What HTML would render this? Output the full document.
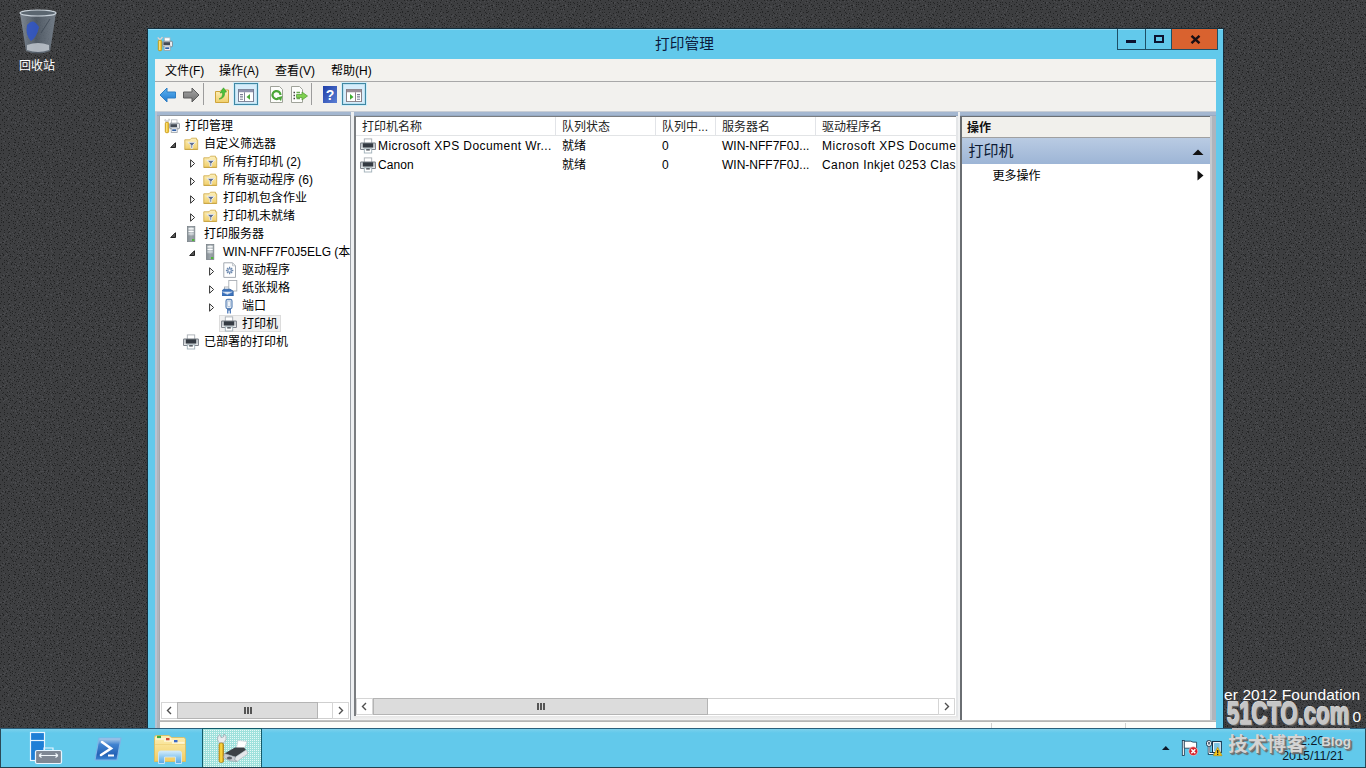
<!DOCTYPE html>
<html lang="zh-CN">
<head>
<meta charset="utf-8">
<title>打印管理</title>
<style>
html,body{margin:0;padding:0;}
body{width:1366px;height:768px;overflow:hidden;position:relative;background:#3b3c3e;font-family:"Liberation Sans","Noto Sans CJK SC",sans-serif;font-size:12px;color:#000;}
#bg{position:absolute;left:0;top:0;}
.abs{position:absolute;}

#win{left:147px;top:28px;width:1077px;height:720px;background:#62c9eb;box-sizing:border-box;border:1px solid #14303f;box-shadow:inset 0 1px 0 #93d9f1;}
#title{left:-1px;top:0;width:1075px;height:30px;text-align:center;line-height:31px;font-size:14.7px;color:#0b1a3c;}
#client{left:7px;top:30px;width:1061px;height:680px;background:#f0f0ee;overflow:hidden;}
.cbtn{top:0;height:21px;box-sizing:border-box;border-left:1px solid #1d4f66;border-bottom:1px solid #1d4f66;}
#menubar{left:0;top:0;width:1061px;height:22px;background:#f3f2ee;border-bottom:1px solid #a8a8a8;}
.mi{top:1px;height:22px;line-height:23px;font-size:12px;color:#000;white-space:nowrap;}
#toolbar{left:0;top:23px;width:1061px;height:29px;background:#f2f1ee;}
#band{left:0;top:52px;width:1061px;height:5px;background:linear-gradient(#c8cdd4 0,#c8cdd4 1px,#a4b7d0 1px,#a4b7d0 4px,#96a9c2 4px);}
.pane{background:#fff;}
.row{position:absolute;left:0;height:18px;line-height:18px;white-space:nowrap;font-size:12px;}
.row span.t{position:absolute;top:0;}
.ico{position:absolute;}
.hdr{position:absolute;top:0;height:18px;line-height:21px;font-size:12px;color:#222;white-space:nowrap;box-sizing:border-box;border-right:1px solid #e2e4e8;padding-left:6px;}
.cell{position:absolute;height:19px;line-height:21px;white-space:nowrap;font-size:12px;letter-spacing:0.2px;}
#taskbar{left:0;top:728px;width:1366px;height:40px;background:linear-gradient(#7bd0ec 0,#62c9eb 4px);box-sizing:border-box;border-top:1px solid #2a5f7c;border-bottom:1px solid #23414d;}
#mdi{background:#aeb4bc;}
.sb{background:#fff;box-sizing:border-box;border-top:1px solid #cfcfcf;border-bottom:1px solid #cfcfcf;}
.sbb{top:-1px;width:17px;height:17px;box-sizing:border-box;border:1px solid #d5d5d5;background:#fff;}
.sbb svg{position:absolute;left:-1px;top:-1px;}
.sbt{top:-1px;height:17px;box-sizing:border-box;background:#dcdcdc;border:1px solid #b4b4b4;}
.sbt i{position:absolute;left:50%;top:4px;margin-left:-4px;width:2px;height:7px;background:#555;box-shadow:3px 0 0 #555,6px 0 0 #555;}
.tb{position:absolute;}
.tbsel{position:absolute;top:1px;width:24px;height:22px;box-sizing:border-box;border:1px solid #3f87a3;box-shadow:0 0 0 1px #d2effa,inset 0 0 0 1px #bfe0ef;background:#d6edfb;}

</style>
</head>
<body>
<svg width="0" height="0" style="position:absolute"><defs>
<linearGradient id="gfold" x1="0" y1="0" x2="0" y2="1"><stop offset="0" stop-color="#fcf0bd"/><stop offset="1" stop-color="#f1cf6a"/></linearGradient>
<linearGradient id="gsrv" x1="0" y1="0" x2="1" y2="0"><stop offset="0" stop-color="#8d969c"/><stop offset="0.5" stop-color="#c2c9cd"/><stop offset="1" stop-color="#9aa2a8"/></linearGradient>
<symbol id="i-prn" viewBox="0 0 16 16"><rect x="4.300" y="0.900" width="7.400" height="5" fill="#fff" stroke="#a9aeb4" stroke-width="0.9"/><rect x="0.400" y="4.900" width="15.200" height="6.600" rx="0.500" fill="#8d939a" stroke="#6e747c" stroke-width="0.8"/><rect x="1.200" y="5.600" width="1.500" height="5" fill="#d4d8dc"/><rect x="13.300" y="5.600" width="1.500" height="5" fill="#d4d8dc"/><rect x="2.900" y="5.400" width="10.200" height="4.300" fill="#343a42"/><rect x="1" y="9.700" width="14" height="1.100" fill="#f2f4f6"/><rect x="4.300" y="10.800" width="7.400" height="4.200" fill="#fff" stroke="#9fb0b8" stroke-width="0.9"/><rect x="6.200" y="11.200" width="3.600" height="1.300" fill="#3a4048"/></symbol>
<symbol id="i-pm" viewBox="0 0 16 16"><path d="M0.8 1.5L3 4.2L5.6 1" stroke="#b9bcc0" stroke-width="1.7" fill="none"/><path d="M1.2 1.6L3 3.8L5.2 1.2" stroke="#f4f4f4" stroke-width="0.8" fill="none"/><rect x="1.3" y="4.3" width="3.4" height="10.4" rx="1.2" fill="#f3c32c" stroke="#c29412" stroke-width="0.8"/><rect x="2.2" y="5" width="1" height="9" fill="#fbe58a"/><rect x="7.5" y="1.8" width="5.5" height="4" fill="#fff" stroke="#b4b8be" stroke-width="0.8"/><rect x="5.8" y="5.2" width="9.6" height="5.6" rx="0.8" fill="#cfd4da" stroke="#7b828a" stroke-width="0.8"/><rect x="6.5" y="6.2" width="6.5" height="2.8" fill="#434a54"/><rect x="13.3" y="6" width="1.6" height="4" fill="#eef0f2"/><rect x="7.2" y="10" width="6" height="4.4" fill="#fff" stroke="#9aa0a6" stroke-width="0.8"/><rect x="8.2" y="11.3" width="4" height="1.8" fill="#2f5fa8"/></symbol>
<symbol id="i-ff" viewBox="0 0 16 16"><path d="M0.8 3.8H6L7.5 2.2H12.500V3.800H13.700V13.500H0.800Z" fill="url(#gfold)" stroke="#d4b152" stroke-width="0.9"/><path d="M0.800 13.300H13.700" stroke="#c19d3e" stroke-width="0.8"/><path d="M4 6.300H11.500L8.700 9.300V12.300H6.900V9.300Z" fill="#5d6d92" stroke="#f4f7fb" stroke-width="0.9"/></symbol>
<symbol id="i-srv" viewBox="0 0 16 16"><rect x="3.400" y="0.400" width="7.400" height="15.200" fill="url(#gsrv)" stroke="#7d858b" stroke-width="0.8"/><rect x="4.500" y="2.200" width="5.200" height="1.300" fill="#fff"/><rect x="4.500" y="4.800" width="5.200" height="1.300" fill="#fff"/><rect x="4.500" y="7.400" width="5.200" height="1" fill="#dfe3e6"/><rect x="3.800" y="9.500" width="6.600" height="5.700" fill="#7f898f" opacity="0.55"/><rect x="8" y="13" width="2.300" height="2" fill="#4fb83a"/></symbol>
<symbol id="i-drv" viewBox="0 0 16 16"><path d="M1.800 0.800H10.500L13.500 3.800V15.400H1.800Z" fill="#fff" stroke="#9aa0a8" stroke-width="0.9"/><path d="M10.500 0.800V3.800H13.500" fill="none" stroke="#b4bac0" stroke-width="0.8"/><g stroke="#6a86ac" stroke-width="1.300"><path d="M7.600 4.800V12.200M3.900 8.500H11.300M5 5.900L10.200 11.100M10.200 5.900L5 11.100"/></g><circle cx="7.600" cy="8.500" r="2.300" fill="#8aa2c4"/><circle cx="7.600" cy="8.500" r="1" fill="#fff"/></symbol>
<symbol id="i-form" viewBox="0 0 16 16"><rect x="2.500" y="7" width="7.500" height="6" fill="#fff" stroke="#a9aeb4" stroke-width="0.9"/><rect x="6.800" y="0.500" width="8" height="10.500" fill="#fff" stroke="#a9aeb4" stroke-width="0.9"/><path d="M-0.500 11.200L1.800 9.200H8L11.200 11.200V16H-0.500Z" fill="#3d73bd" stroke="#2f5f9f" stroke-width="0.8"/><path d="M0.300 11.800L5.300 14.300L10.400 11.800" fill="#dfe9f6" stroke="#c5d3e8" stroke-width="0.7"/></symbol>
<symbol id="i-port" viewBox="0 0 16 16"><rect x="4" y="1.300" width="6" height="9.400" rx="1.800" fill="#e4ecf6" stroke="#5f86b8" stroke-width="1.200"/><rect x="5.800" y="3" width="2.400" height="5.500" fill="#fff" stroke="#9db3d0" stroke-width="0.700"/><rect x="5" y="10.700" width="4" height="2" fill="#4f7ab4"/><path d="M5.800 12.500V15.600M8.300 12.500V15.600" stroke="#3b6db4" stroke-width="1.200"/></symbol>
</defs></svg>

<svg id="bg" width="1366" height="768"><defs><pattern id="noise" width="72" height="72" patternUnits="userSpaceOnUse"><rect width="72" height="72" fill="#3d3e40"/><path fill="#4a4b4e" d="M0 26h1v1h-1zM0 30h1v1h-1zM0 63h1v1h-1zM1 26h1v1h-1zM1 38h1v1h-1zM1 60h1v1h-1zM2 19h1v1h-1zM2 34h1v1h-1zM2 61h1v1h-1zM3 1h1v1h-1zM3 4h1v1h-1zM3 21h1v1h-1zM3 25h1v1h-1zM3 27h1v1h-1zM3 41h1v1h-1zM3 58h1v1h-1zM3 61h1v1h-1zM3 69h1v1h-1zM4 17h1v1h-1zM4 18h1v1h-1zM4 18h1v1h-1zM4 25h1v1h-1zM4 26h1v1h-1zM4 40h1v1h-1zM4 59h1v1h-1zM4 69h1v1h-1zM5 0h1v1h-1zM5 0h1v1h-1zM5 20h1v1h-1zM5 24h1v1h-1zM5 39h1v1h-1zM6 22h1v1h-1zM6 37h1v1h-1zM6 39h1v1h-1zM6 57h1v1h-1zM7 23h1v1h-1zM7 30h1v1h-1zM7 38h1v1h-1zM7 58h1v1h-1zM8 13h1v1h-1zM8 27h1v1h-1zM8 31h1v1h-1zM8 41h1v1h-1zM8 46h1v1h-1zM8 47h1v1h-1zM8 56h1v1h-1zM8 65h1v1h-1zM9 4h1v1h-1zM9 12h1v1h-1zM9 14h1v1h-1zM9 17h1v1h-1zM9 34h1v1h-1zM9 43h1v1h-1zM9 67h1v1h-1zM9 71h1v1h-1zM10 0h1v1h-1zM10 17h1v1h-1zM10 45h1v1h-1zM10 61h1v1h-1zM11 21h1v1h-1zM11 29h1v1h-1zM11 32h1v1h-1zM11 50h1v1h-1zM11 65h1v1h-1zM12 16h1v1h-1zM12 33h1v1h-1zM12 61h1v1h-1zM13 2h1v1h-1zM13 18h1v1h-1zM13 20h1v1h-1zM13 25h1v1h-1zM13 39h1v1h-1zM13 50h1v1h-1zM13 71h1v1h-1zM14 58h1v1h-1zM15 0h1v1h-1zM15 2h1v1h-1zM15 14h1v1h-1zM15 47h1v1h-1zM15 50h1v1h-1zM15 51h1v1h-1zM16 8h1v1h-1zM16 34h1v1h-1zM16 53h1v1h-1zM16 62h1v1h-1zM17 5h1v1h-1zM17 6h1v1h-1zM17 18h1v1h-1zM17 26h1v1h-1zM17 30h1v1h-1zM17 39h1v1h-1zM17 49h1v1h-1zM18 25h1v1h-1zM18 29h1v1h-1zM18 33h1v1h-1zM18 35h1v1h-1zM18 49h1v1h-1zM18 49h1v1h-1zM18 60h1v1h-1zM19 2h1v1h-1zM19 8h1v1h-1zM19 16h1v1h-1zM19 22h1v1h-1zM19 37h1v1h-1zM19 41h1v1h-1zM19 46h1v1h-1zM19 61h1v1h-1zM20 15h1v1h-1zM20 15h1v1h-1zM20 16h1v1h-1zM20 25h1v1h-1zM20 41h1v1h-1zM20 42h1v1h-1zM20 52h1v1h-1zM20 53h1v1h-1zM20 61h1v1h-1zM20 63h1v1h-1zM21 14h1v1h-1zM21 23h1v1h-1zM21 28h1v1h-1zM21 28h1v1h-1zM22 23h1v1h-1zM22 65h1v1h-1zM22 69h1v1h-1zM23 1h1v1h-1zM23 30h1v1h-1zM23 35h1v1h-1zM23 41h1v1h-1zM23 43h1v1h-1zM23 45h1v1h-1zM23 62h1v1h-1zM23 70h1v1h-1zM24 6h1v1h-1zM24 11h1v1h-1zM24 19h1v1h-1zM24 20h1v1h-1zM24 25h1v1h-1zM24 34h1v1h-1zM24 37h1v1h-1zM24 51h1v1h-1zM24 53h1v1h-1zM25 34h1v1h-1zM25 40h1v1h-1zM25 46h1v1h-1zM25 48h1v1h-1zM25 52h1v1h-1zM26 8h1v1h-1zM26 25h1v1h-1zM26 51h1v1h-1zM26 65h1v1h-1zM26 69h1v1h-1zM27 17h1v1h-1zM27 53h1v1h-1zM27 59h1v1h-1zM27 69h1v1h-1zM27 70h1v1h-1zM28 13h1v1h-1zM28 20h1v1h-1zM28 30h1v1h-1zM28 35h1v1h-1zM28 56h1v1h-1zM29 4h1v1h-1zM29 33h1v1h-1zM29 37h1v1h-1zM29 45h1v1h-1zM30 18h1v1h-1zM30 31h1v1h-1zM30 33h1v1h-1zM30 37h1v1h-1zM30 46h1v1h-1zM30 52h1v1h-1zM31 22h1v1h-1zM31 53h1v1h-1zM31 56h1v1h-1zM31 61h1v1h-1zM31 63h1v1h-1zM31 67h1v1h-1zM32 15h1v1h-1zM32 30h1v1h-1zM32 31h1v1h-1zM32 35h1v1h-1zM32 47h1v1h-1zM32 54h1v1h-1zM32 62h1v1h-1zM32 66h1v1h-1zM32 68h1v1h-1zM32 70h1v1h-1zM33 3h1v1h-1zM33 21h1v1h-1zM33 23h1v1h-1zM33 31h1v1h-1zM33 40h1v1h-1zM33 62h1v1h-1zM33 62h1v1h-1zM33 63h1v1h-1zM33 65h1v1h-1zM34 13h1v1h-1zM34 34h1v1h-1zM34 47h1v1h-1zM34 66h1v1h-1zM34 67h1v1h-1zM35 2h1v1h-1zM35 8h1v1h-1zM35 46h1v1h-1zM35 46h1v1h-1zM35 68h1v1h-1zM35 70h1v1h-1zM36 18h1v1h-1zM36 28h1v1h-1zM36 45h1v1h-1zM36 46h1v1h-1zM36 46h1v1h-1zM36 68h1v1h-1zM37 7h1v1h-1zM37 29h1v1h-1zM37 31h1v1h-1zM37 47h1v1h-1zM38 2h1v1h-1zM38 3h1v1h-1zM38 23h1v1h-1zM38 43h1v1h-1zM38 70h1v1h-1zM39 2h1v1h-1zM39 14h1v1h-1zM39 15h1v1h-1zM39 35h1v1h-1zM39 40h1v1h-1zM39 51h1v1h-1zM39 52h1v1h-1zM39 56h1v1h-1zM39 59h1v1h-1zM39 60h1v1h-1zM39 70h1v1h-1zM40 26h1v1h-1zM40 35h1v1h-1zM40 39h1v1h-1zM40 52h1v1h-1zM40 67h1v1h-1zM41 22h1v1h-1zM41 23h1v1h-1zM41 29h1v1h-1zM41 39h1v1h-1zM41 63h1v1h-1zM42 6h1v1h-1zM42 18h1v1h-1zM42 24h1v1h-1zM42 36h1v1h-1zM42 37h1v1h-1zM42 39h1v1h-1zM42 56h1v1h-1zM42 57h1v1h-1zM43 22h1v1h-1zM43 27h1v1h-1zM43 39h1v1h-1zM43 46h1v1h-1zM43 54h1v1h-1zM44 27h1v1h-1zM44 30h1v1h-1zM44 31h1v1h-1zM44 41h1v1h-1zM44 52h1v1h-1zM45 29h1v1h-1zM45 60h1v1h-1zM46 1h1v1h-1zM46 7h1v1h-1zM46 8h1v1h-1zM46 34h1v1h-1zM46 39h1v1h-1zM46 41h1v1h-1zM46 41h1v1h-1zM46 60h1v1h-1zM47 8h1v1h-1zM47 38h1v1h-1zM47 53h1v1h-1zM47 57h1v1h-1zM47 64h1v1h-1zM48 2h1v1h-1zM48 6h1v1h-1zM48 14h1v1h-1zM48 41h1v1h-1zM48 49h1v1h-1zM48 60h1v1h-1zM48 69h1v1h-1zM49 67h1v1h-1zM50 6h1v1h-1zM50 15h1v1h-1zM50 18h1v1h-1zM50 20h1v1h-1zM50 27h1v1h-1zM50 30h1v1h-1zM50 30h1v1h-1zM50 32h1v1h-1zM50 49h1v1h-1zM50 52h1v1h-1zM50 71h1v1h-1zM51 6h1v1h-1zM51 7h1v1h-1zM51 22h1v1h-1zM51 23h1v1h-1zM51 25h1v1h-1zM51 34h1v1h-1zM51 35h1v1h-1zM51 39h1v1h-1zM51 40h1v1h-1zM51 42h1v1h-1zM51 43h1v1h-1zM51 63h1v1h-1zM52 1h1v1h-1zM52 36h1v1h-1zM52 55h1v1h-1zM52 59h1v1h-1zM52 67h1v1h-1zM53 10h1v1h-1zM53 15h1v1h-1zM53 17h1v1h-1zM53 32h1v1h-1zM53 42h1v1h-1zM53 44h1v1h-1zM53 59h1v1h-1zM54 5h1v1h-1zM54 61h1v1h-1zM55 15h1v1h-1zM55 30h1v1h-1zM55 48h1v1h-1zM55 52h1v1h-1zM55 53h1v1h-1zM56 1h1v1h-1zM56 13h1v1h-1zM56 22h1v1h-1zM56 26h1v1h-1zM56 67h1v1h-1zM57 10h1v1h-1zM57 45h1v1h-1zM57 48h1v1h-1zM57 51h1v1h-1zM57 62h1v1h-1zM57 65h1v1h-1zM57 67h1v1h-1zM58 0h1v1h-1zM58 4h1v1h-1zM58 7h1v1h-1zM58 66h1v1h-1zM59 1h1v1h-1zM59 9h1v1h-1zM59 10h1v1h-1zM59 15h1v1h-1zM59 15h1v1h-1zM59 46h1v1h-1zM59 49h1v1h-1zM59 50h1v1h-1zM59 57h1v1h-1zM60 13h1v1h-1zM60 17h1v1h-1zM60 21h1v1h-1zM60 41h1v1h-1zM60 54h1v1h-1zM60 65h1v1h-1zM61 4h1v1h-1zM61 4h1v1h-1zM61 5h1v1h-1zM61 6h1v1h-1zM61 17h1v1h-1zM61 21h1v1h-1zM61 28h1v1h-1zM61 51h1v1h-1zM62 5h1v1h-1zM62 37h1v1h-1zM62 49h1v1h-1zM62 59h1v1h-1zM63 7h1v1h-1zM63 20h1v1h-1zM63 35h1v1h-1zM63 38h1v1h-1zM63 55h1v1h-1zM64 34h1v1h-1zM64 37h1v1h-1zM64 65h1v1h-1zM64 66h1v1h-1zM65 16h1v1h-1zM66 0h1v1h-1zM66 11h1v1h-1zM66 16h1v1h-1zM66 16h1v1h-1zM66 16h1v1h-1zM66 23h1v1h-1zM66 29h1v1h-1zM66 37h1v1h-1zM66 45h1v1h-1zM66 70h1v1h-1zM67 14h1v1h-1zM67 30h1v1h-1zM67 33h1v1h-1zM67 42h1v1h-1zM67 49h1v1h-1zM67 66h1v1h-1zM68 6h1v1h-1zM68 12h1v1h-1zM68 15h1v1h-1zM68 15h1v1h-1zM68 22h1v1h-1zM68 30h1v1h-1zM69 17h1v1h-1zM69 28h1v1h-1zM69 50h1v1h-1zM69 52h1v1h-1zM69 64h1v1h-1zM69 71h1v1h-1zM70 9h1v1h-1zM70 10h1v1h-1zM70 11h1v1h-1zM70 30h1v1h-1zM70 33h1v1h-1zM70 61h1v1h-1zM70 63h1v1h-1zM71 6h1v1h-1zM71 7h1v1h-1zM71 25h1v1h-1zM71 38h1v1h-1zM71 39h1v1h-1zM71 48h1v1h-1z"/><path fill="#242526" d="M0 9h1v1h-1zM0 15h1v1h-1zM0 20h1v1h-1zM0 28h1v1h-1zM0 39h1v1h-1zM0 42h1v1h-1zM0 52h1v1h-1zM0 56h1v1h-1zM0 61h1v1h-1zM1 2h1v1h-1zM1 4h1v1h-1zM1 6h1v1h-1zM1 13h1v1h-1zM1 30h1v1h-1zM1 64h1v1h-1zM1 67h1v1h-1zM1 71h1v1h-1zM2 22h1v1h-1zM2 26h1v1h-1zM2 33h1v1h-1zM2 37h1v1h-1zM2 47h1v1h-1zM2 48h1v1h-1zM2 59h1v1h-1zM3 5h1v1h-1zM3 6h1v1h-1zM3 9h1v1h-1zM3 19h1v1h-1zM3 23h1v1h-1zM3 26h1v1h-1zM3 32h1v1h-1zM3 38h1v1h-1zM3 39h1v1h-1zM3 63h1v1h-1zM3 66h1v1h-1zM4 1h1v1h-1zM4 14h1v1h-1zM4 16h1v1h-1zM4 44h1v1h-1zM4 46h1v1h-1zM4 50h1v1h-1zM4 52h1v1h-1zM4 54h1v1h-1zM5 28h1v1h-1zM5 34h1v1h-1zM5 59h1v1h-1zM5 60h1v1h-1zM5 69h1v1h-1zM6 4h1v1h-1zM6 25h1v1h-1zM6 28h1v1h-1zM6 35h1v1h-1zM6 44h1v1h-1zM6 48h1v1h-1zM6 56h1v1h-1zM7 13h1v1h-1zM7 20h1v1h-1zM7 21h1v1h-1zM7 32h1v1h-1zM7 36h1v1h-1zM7 45h1v1h-1zM7 53h1v1h-1zM7 61h1v1h-1zM7 65h1v1h-1zM8 2h1v1h-1zM8 6h1v1h-1zM8 11h1v1h-1zM8 16h1v1h-1zM8 39h1v1h-1zM8 59h1v1h-1zM8 66h1v1h-1zM8 71h1v1h-1zM9 0h1v1h-1zM9 6h1v1h-1zM9 9h1v1h-1zM9 15h1v1h-1zM9 22h1v1h-1zM9 31h1v1h-1zM9 35h1v1h-1zM9 42h1v1h-1zM9 59h1v1h-1zM9 70h1v1h-1zM10 19h1v1h-1zM10 24h1v1h-1zM10 27h1v1h-1zM10 38h1v1h-1zM10 40h1v1h-1zM10 53h1v1h-1zM11 4h1v1h-1zM11 12h1v1h-1zM11 47h1v1h-1zM11 48h1v1h-1zM11 54h1v1h-1zM11 61h1v1h-1zM11 64h1v1h-1zM11 66h1v1h-1zM12 23h1v1h-1zM12 25h1v1h-1zM12 32h1v1h-1zM12 40h1v1h-1zM12 46h1v1h-1zM12 56h1v1h-1zM13 5h1v1h-1zM13 7h1v1h-1zM13 35h1v1h-1zM13 52h1v1h-1zM13 57h1v1h-1zM13 60h1v1h-1zM13 63h1v1h-1zM14 1h1v1h-1zM14 10h1v1h-1zM14 12h1v1h-1zM14 17h1v1h-1zM14 20h1v1h-1zM14 27h1v1h-1zM14 36h1v1h-1zM14 43h1v1h-1zM14 48h1v1h-1zM14 67h1v1h-1zM14 70h1v1h-1zM15 5h1v1h-1zM15 8h1v1h-1zM15 12h1v1h-1zM15 16h1v1h-1zM15 24h1v1h-1zM15 42h1v1h-1zM15 46h1v1h-1zM15 57h1v1h-1zM15 68h1v1h-1zM15 70h1v1h-1zM16 11h1v1h-1zM16 21h1v1h-1zM16 29h1v1h-1zM16 41h1v1h-1zM16 49h1v1h-1zM16 55h1v1h-1zM16 60h1v1h-1zM16 65h1v1h-1zM17 2h1v1h-1zM17 19h1v1h-1zM17 32h1v1h-1zM17 33h1v1h-1zM17 38h1v1h-1zM17 52h1v1h-1zM18 0h1v1h-1zM18 17h1v1h-1zM18 21h1v1h-1zM18 26h1v1h-1zM18 54h1v1h-1zM18 70h1v1h-1zM19 4h1v1h-1zM19 9h1v1h-1zM19 14h1v1h-1zM19 19h1v1h-1zM19 33h1v1h-1zM19 38h1v1h-1zM19 43h1v1h-1zM19 50h1v1h-1zM19 53h1v1h-1zM19 65h1v1h-1zM19 66h1v1h-1zM20 6h1v1h-1zM20 29h1v1h-1zM20 32h1v1h-1zM20 39h1v1h-1zM20 47h1v1h-1zM20 59h1v1h-1zM20 62h1v1h-1zM21 5h1v1h-1zM21 25h1v1h-1zM21 38h1v1h-1zM21 40h1v1h-1zM21 48h1v1h-1zM21 55h1v1h-1zM21 59h1v1h-1zM22 1h1v1h-1zM22 8h1v1h-1zM22 16h1v1h-1zM22 22h1v1h-1zM22 31h1v1h-1zM22 43h1v1h-1zM22 46h1v1h-1zM22 53h1v1h-1zM22 61h1v1h-1zM23 10h1v1h-1zM23 14h1v1h-1zM23 18h1v1h-1zM23 28h1v1h-1zM23 33h1v1h-1zM23 65h1v1h-1zM23 68h1v1h-1zM23 71h1v1h-1zM24 0h1v1h-1zM24 8h1v1h-1zM24 15h1v1h-1zM24 23h1v1h-1zM24 26h1v1h-1zM24 35h1v1h-1zM24 46h1v1h-1zM24 59h1v1h-1zM24 71h1v1h-1zM25 3h1v1h-1zM25 28h1v1h-1zM25 53h1v1h-1zM25 64h1v1h-1zM25 68h1v1h-1zM26 9h1v1h-1zM26 12h1v1h-1zM26 20h1v1h-1zM26 32h1v1h-1zM26 37h1v1h-1zM26 41h1v1h-1zM26 43h1v1h-1zM26 49h1v1h-1zM26 54h1v1h-1zM26 62h1v1h-1zM27 5h1v1h-1zM27 7h1v1h-1zM27 16h1v1h-1zM27 19h1v1h-1zM27 22h1v1h-1zM27 30h1v1h-1zM27 37h1v1h-1zM27 39h1v1h-1zM27 47h1v1h-1zM27 48h1v1h-1zM27 55h1v1h-1zM27 57h1v1h-1zM27 61h1v1h-1zM27 67h1v1h-1zM28 9h1v1h-1zM28 12h1v1h-1zM28 34h1v1h-1zM28 42h1v1h-1zM28 71h1v1h-1zM29 2h1v1h-1zM29 26h1v1h-1zM29 27h1v1h-1zM29 53h1v1h-1zM29 64h1v1h-1zM30 4h1v1h-1zM30 14h1v1h-1zM30 21h1v1h-1zM30 29h1v1h-1zM30 41h1v1h-1zM30 45h1v1h-1zM30 67h1v1h-1zM30 69h1v1h-1zM31 32h1v1h-1zM31 34h1v1h-1zM31 49h1v1h-1zM31 51h1v1h-1zM31 54h1v1h-1zM31 58h1v1h-1zM31 64h1v1h-1zM32 0h1v1h-1zM32 7h1v1h-1zM32 9h1v1h-1zM32 16h1v1h-1zM32 18h1v1h-1zM32 25h1v1h-1zM32 37h1v1h-1zM32 43h1v1h-1zM32 61h1v1h-1zM33 4h1v1h-1zM33 7h1v1h-1zM33 12h1v1h-1zM33 26h1v1h-1zM33 34h1v1h-1zM33 44h1v1h-1zM33 51h1v1h-1zM33 64h1v1h-1zM34 9h1v1h-1zM34 18h1v1h-1zM34 22h1v1h-1zM34 46h1v1h-1zM34 49h1v1h-1zM34 57h1v1h-1zM34 70h1v1h-1zM35 1h1v1h-1zM35 15h1v1h-1zM35 29h1v1h-1zM35 31h1v1h-1zM35 38h1v1h-1zM35 40h1v1h-1zM35 55h1v1h-1zM35 60h1v1h-1zM35 66h1v1h-1zM36 20h1v1h-1zM36 24h1v1h-1zM36 27h1v1h-1zM36 38h1v1h-1zM36 69h1v1h-1zM37 2h1v1h-1zM37 3h1v1h-1zM37 6h1v1h-1zM37 13h1v1h-1zM37 21h1v1h-1zM37 33h1v1h-1zM37 39h1v1h-1zM37 45h1v1h-1zM37 56h1v1h-1zM37 61h1v1h-1zM37 66h1v1h-1zM38 9h1v1h-1zM38 17h1v1h-1zM38 32h1v1h-1zM38 42h1v1h-1zM38 50h1v1h-1zM38 51h1v1h-1zM38 57h1v1h-1zM38 65h1v1h-1zM39 5h1v1h-1zM39 7h1v1h-1zM39 19h1v1h-1zM39 28h1v1h-1zM39 38h1v1h-1zM39 42h1v1h-1zM39 46h1v1h-1zM39 57h1v1h-1zM39 62h1v1h-1zM39 63h1v1h-1zM39 68h1v1h-1zM40 12h1v1h-1zM40 22h1v1h-1zM40 25h1v1h-1zM40 34h1v1h-1zM40 56h1v1h-1zM41 2h1v1h-1zM41 9h1v1h-1zM41 15h1v1h-1zM41 30h1v1h-1zM41 41h1v1h-1zM41 49h1v1h-1zM41 51h1v1h-1zM41 69h1v1h-1zM42 3h1v1h-1zM42 11h1v1h-1zM42 12h1v1h-1zM42 26h1v1h-1zM42 28h1v1h-1zM42 61h1v1h-1zM43 16h1v1h-1zM43 35h1v1h-1zM43 43h1v1h-1zM43 53h1v1h-1zM43 64h1v1h-1zM44 0h1v1h-1zM44 7h1v1h-1zM44 20h1v1h-1zM44 23h1v1h-1zM44 32h1v1h-1zM44 38h1v1h-1zM44 40h1v1h-1zM44 47h1v1h-1zM44 50h1v1h-1zM44 56h1v1h-1zM44 58h1v1h-1zM44 66h1v1h-1zM44 70h1v1h-1zM45 3h1v1h-1zM45 6h1v1h-1zM45 13h1v1h-1zM45 17h1v1h-1zM45 25h1v1h-1zM45 38h1v1h-1zM45 45h1v1h-1zM45 50h1v1h-1zM45 57h1v1h-1zM45 64h1v1h-1zM45 68h1v1h-1zM46 19h1v1h-1zM46 23h1v1h-1zM46 33h1v1h-1zM46 44h1v1h-1zM46 51h1v1h-1zM46 55h1v1h-1zM47 0h1v1h-1zM47 11h1v1h-1zM47 28h1v1h-1zM47 31h1v1h-1zM47 41h1v1h-1zM47 62h1v1h-1zM47 69h1v1h-1zM48 7h1v1h-1zM48 11h1v1h-1zM48 19h1v1h-1zM48 34h1v1h-1zM48 38h1v1h-1zM48 39h1v1h-1zM49 4h1v1h-1zM49 14h1v1h-1zM49 15h1v1h-1zM49 23h1v1h-1zM49 29h1v1h-1zM49 32h1v1h-1zM49 43h1v1h-1zM49 47h1v1h-1zM49 50h1v1h-1zM49 53h1v1h-1zM49 62h1v1h-1zM49 69h1v1h-1zM50 0h1v1h-1zM50 26h1v1h-1zM50 56h1v1h-1zM50 57h1v1h-1zM50 64h1v1h-1zM50 67h1v1h-1zM51 0h1v1h-1zM51 24h1v1h-1zM51 28h1v1h-1zM51 44h1v1h-1zM51 50h1v1h-1zM51 55h1v1h-1zM51 68h1v1h-1zM52 10h1v1h-1zM52 15h1v1h-1zM52 18h1v1h-1zM52 32h1v1h-1zM52 39h1v1h-1zM52 46h1v1h-1zM52 51h1v1h-1zM52 61h1v1h-1zM52 70h1v1h-1zM53 4h1v1h-1zM53 8h1v1h-1zM53 12h1v1h-1zM53 22h1v1h-1zM53 33h1v1h-1zM53 38h1v1h-1zM53 57h1v1h-1zM53 64h1v1h-1zM54 0h1v1h-1zM54 13h1v1h-1zM54 25h1v1h-1zM54 31h1v1h-1zM54 36h1v1h-1zM54 39h1v1h-1zM54 42h1v1h-1zM54 47h1v1h-1zM54 60h1v1h-1zM54 65h1v1h-1zM54 67h1v1h-1zM55 3h1v1h-1zM55 17h1v1h-1zM55 21h1v1h-1zM55 33h1v1h-1zM56 6h1v1h-1zM56 9h1v1h-1zM56 20h1v1h-1zM56 27h1v1h-1zM56 50h1v1h-1zM56 53h1v1h-1zM56 54h1v1h-1zM56 58h1v1h-1zM56 70h1v1h-1zM57 6h1v1h-1zM57 13h1v1h-1zM57 17h1v1h-1zM57 20h1v1h-1zM57 22h1v1h-1zM57 28h1v1h-1zM57 32h1v1h-1zM57 49h1v1h-1zM57 55h1v1h-1zM58 9h1v1h-1zM58 26h1v1h-1zM58 47h1v1h-1zM58 51h1v1h-1zM58 58h1v1h-1zM58 60h1v1h-1zM58 69h1v1h-1zM59 0h1v1h-1zM59 5h1v1h-1zM59 33h1v1h-1zM59 38h1v1h-1zM59 41h1v1h-1zM59 42h1v1h-1zM59 64h1v1h-1zM59 67h1v1h-1zM60 5h1v1h-1zM60 7h1v1h-1zM60 9h1v1h-1zM60 19h1v1h-1zM60 33h1v1h-1zM60 47h1v1h-1zM60 49h1v1h-1zM60 52h1v1h-1zM60 56h1v1h-1zM61 1h1v1h-1zM61 14h1v1h-1zM61 29h1v1h-1zM61 36h1v1h-1zM61 42h1v1h-1zM61 57h1v1h-1zM61 65h1v1h-1zM61 67h1v1h-1zM61 70h1v1h-1zM62 16h1v1h-1zM62 21h1v1h-1zM62 26h1v1h-1zM62 31h1v1h-1zM62 41h1v1h-1zM62 62h1v1h-1zM63 11h1v1h-1zM63 33h1v1h-1zM63 46h1v1h-1zM63 62h1v1h-1zM63 65h1v1h-1zM64 2h1v1h-1zM64 4h1v1h-1zM64 6h1v1h-1zM64 17h1v1h-1zM64 28h1v1h-1zM64 38h1v1h-1zM64 39h1v1h-1zM64 48h1v1h-1zM64 56h1v1h-1zM64 58h1v1h-1zM64 67h1v1h-1zM65 14h1v1h-1zM65 19h1v1h-1zM65 23h1v1h-1zM65 26h1v1h-1zM65 31h1v1h-1zM65 44h1v1h-1zM65 52h1v1h-1zM65 69h1v1h-1zM66 2h1v1h-1zM66 4h1v1h-1zM66 17h1v1h-1zM66 25h1v1h-1zM66 31h1v1h-1zM66 35h1v1h-1zM66 39h1v1h-1zM67 9h1v1h-1zM67 18h1v1h-1zM67 23h1v1h-1zM67 27h1v1h-1zM67 36h1v1h-1zM67 44h1v1h-1zM67 50h1v1h-1zM67 51h1v1h-1zM67 59h1v1h-1zM67 61h1v1h-1zM67 68h1v1h-1zM67 71h1v1h-1zM68 7h1v1h-1zM68 14h1v1h-1zM68 46h1v1h-1zM68 55h1v1h-1zM68 63h1v1h-1zM69 2h1v1h-1zM69 14h1v1h-1zM69 15h1v1h-1zM69 27h1v1h-1zM69 36h1v1h-1zM69 39h1v1h-1zM69 53h1v1h-1zM69 57h1v1h-1zM69 63h1v1h-1zM69 67h1v1h-1zM69 69h1v1h-1zM70 3h1v1h-1zM70 7h1v1h-1zM70 19h1v1h-1zM70 22h1v1h-1zM70 34h1v1h-1zM70 55h1v1h-1zM71 11h1v1h-1zM71 24h1v1h-1zM71 30h1v1h-1zM71 42h1v1h-1zM71 45h1v1h-1zM71 50h1v1h-1zM71 62h1v1h-1z"/></pattern></defs><rect width="1366" height="768" fill="url(#noise)"/></svg>

<div id="recycle" class="abs" style="left:17px;top:7px;width:42px;height:50px;">
<svg width="42" height="50" viewBox="0 0 42 50">
<defs><linearGradient id="rb" x1="0" x2="1"><stop offset="0" stop-color="#8b96a2"/><stop offset="0.45" stop-color="#525d69"/><stop offset="1" stop-color="#7d8894"/></linearGradient></defs>
<path d="M3 6 L39 6 L33 44 Q21 49 9 44 Z" fill="url(#rb)" opacity="0.85"/>
<ellipse cx="21" cy="6" rx="18" ry="3" fill="#5b6670" stroke="#c9d2da" stroke-width="1.2"/>
<path d="M10 18 q6 -8 12 2 q-2 10 -8 14 q-6 -6 -4 -16z" fill="#2f55c8" opacity="0.85"/><path d="M33 12L24 26" stroke="#3a4450" stroke-width="1" opacity="0.7"/>
<path d="M10 38 Q21 34 32 38 L32 43 Q21 47 10 43 Z" fill="#c5ccd3" opacity="0.8"/>
</svg></div>
<div class="abs" style="left:0;top:58px;width:74px;text-align:center;font-size:12px;line-height:16px;color:#fff;">回收站</div>
<div class="abs" style="left:1224px;top:684px;width:142px;height:22px;line-height:22px;font-size:15.5px;letter-spacing:0.1px;color:#fff;white-space:nowrap;overflow:hidden;">er 2012 Foundation</div>
<div class="abs" style="left:1224px;top:706px;width:137px;height:22px;line-height:22px;font-size:15.5px;color:#fff;white-space:nowrap;text-align:right;">0</div>


<div id="win" class="abs">
<div id="title" class="abs">打印管理</div>
<div id="ticon" class="abs" style="left:9px;top:7px;width:16px;height:16px;"><svg width="16" height="16" viewBox="0 0 16 16"><use href="#i-pm"/></svg></div>
<div class="abs cbtn" style="left:969px;width:28px;"><div class="abs" style="left:8px;top:11px;width:10px;height:3px;background:#0c1330;"></div></div>
<div class="abs cbtn" style="left:997px;width:26px;"><div class="abs" style="left:8px;top:6px;width:6px;height:4px;border:2px solid #0c1330;"></div></div>
<div class="abs cbtn" style="left:1023px;width:47px;background:#d9622f;border-right:1px solid #1d4f66;"><svg class="abs" style="left:18px;top:6px" width="11" height="9" viewBox="0 0 11 9"><path d="M1.5 0.8L9.5 8.2M9.5 0.8L1.5 8.2" stroke="#1a0f14" stroke-width="2.4"/></svg></div>
<div id="client" class="abs">
<div id="menubar" class="abs">
<div class="abs mi" style="left:10px;">文件(F)</div>
<div class="abs mi" style="left:64px;">操作(A)</div>
<div class="abs mi" style="left:120px;">查看(V)</div>
<div class="abs mi" style="left:176px;">帮助(H)</div>
</div>
<div id="toolbar" class="abs"><svg class="tb" style="left:4px;top:4px" width="18" height="18" viewBox="0 0 18 18"><defs><linearGradient id="gbk" x1="0" y1="0" x2="0" y2="1"><stop offset="0" stop-color="#5db4f0"/><stop offset="1" stop-color="#1f78d0"/></linearGradient><linearGradient id="gfw" x1="0" y1="0" x2="0" y2="1"><stop offset="0" stop-color="#a8a8a8"/><stop offset="1" stop-color="#6e6e6e"/></linearGradient></defs><path d="M1 9L8 2V6H16.5V12H8V16Z" fill="url(#gbk)" stroke="#2f7fc4" stroke-width="1"/></svg>
<svg class="tb" style="left:27px;top:4px" width="18" height="18" viewBox="0 0 18 18"><path d="M17 9L10 2V6H1.5V12H10V16Z" fill="url(#gfw)" stroke="#5c5c5c" stroke-width="1"/></svg>
<div class="tb" style="left:48px;top:1px;width:1px;height:22px;background:#9c9c9c;"></div>
<svg class="tb" style="left:59px;top:5px" width="17" height="17" viewBox="0 0 17 17"><path d="M1.5 4.5H6L7.5 3H14.5V15.5H1.5Z" fill="url(#gfold)" stroke="#cfa43a"/><path d="M5 12C8 11 9 8 8.5 5.5L6 6L9.5 0.8L12.5 5L10.5 5.3C11 9 9 12 5 12Z" fill="#4cc23a" stroke="#2f9a25" stroke-width="0.6"/></svg>
<div class="tbsel" style="left:79px;"></div>
<svg class="tb" style="left:83px;top:7px" width="16" height="13" viewBox="0 0 16 14" preserveAspectRatio="none"><rect x="0.5" y="0.5" width="15" height="13" fill="#fff" stroke="#7a7f94"/><rect x="1" y="1" width="14" height="2.5" fill="#8d93ad"/><path d="M6.5 3.5V13.5" stroke="#7a7f94"/><path d="M2 6H5M2 8.5H5M2 11H5" stroke="#7a7f94" stroke-width="1.2"/><path d="M12 5.5V11.5L8.5 8.5Z" fill="#49a83a"/></svg>
<svg class="tb" style="left:114px;top:4px" width="16" height="18" viewBox="0 0 16 18"><path d="M1.5 0.5H10.5L13.5 3.5V16.5H1.5Z" fill="#fdfdfb" stroke="#a0a39a"/><path d="M11.5 9A4 4 0 1 0 9.5 12.5" fill="none" stroke="#4aa637" stroke-width="2.2"/><path d="M8 11.5L13.5 10L12 15Z" fill="#4aa637"/></svg>
<svg class="tb" style="left:135px;top:4px" width="19" height="18" viewBox="0 0 19 18"><path d="M1.5 0.5H9.5L12.5 3.5V16.5H1.5Z" fill="#fdfdfb" stroke="#a0a39a"/><path d="M3.5 6.5h1.5M3.5 9.5h1.5M3.5 12.5h1.5" stroke="#444" stroke-width="1.4"/><path d="M6.5 6.5H10M6.5 12.5H10" stroke="#6aa84f" stroke-width="1.3"/><path d="M6.5 8.5H12V6L17.5 10L12 14V11.5H6.5Z" fill="#7fd04f" stroke="#4f9a32" stroke-width="0.7"/></svg>
<div class="tb" style="left:156px;top:1px;width:1px;height:22px;background:#9c9c9c;"></div>
<svg class="tb" style="left:168px;top:4px" width="14" height="17" viewBox="0 0 14 17"><defs><linearGradient id="ghelp" x1="0" y1="0" x2="1" y2="1"><stop offset="0" stop-color="#1f3fa8"/><stop offset="1" stop-color="#5c7fd4"/></linearGradient></defs><rect x="0" y="0" width="14" height="17" fill="url(#ghelp)"/><text x="7" y="13.5" font-family="Liberation Sans, sans-serif" font-size="14" font-weight="bold" fill="#fff" text-anchor="middle">?</text></svg>
<div class="tbsel" style="left:187px;"></div>
<svg class="tb" style="left:191px;top:7px" width="16" height="13" viewBox="0 0 16 14" preserveAspectRatio="none"><rect x="0.5" y="0.5" width="15" height="13" fill="#fff" stroke="#8a7f86"/><rect x="1" y="1" width="14" height="2.5" fill="#9a8f99"/><path d="M9.5 3.5V13.5" stroke="#8a7f86"/><path d="M11 6H14M11 8.5H14M11 11H14" stroke="#7a7f94" stroke-width="1.2"/><path d="M4 5.5V11.5L7.5 8.5Z" fill="#3fae2f"/></svg>
</div>
<div id="band" class="abs"></div>
<div id="mdi" class="abs" style="left:0;top:57px;width:1061px;height:604px;"></div>
<div id="tree" class="abs pane" style="left:5px;top:57px;width:190px;height:604px;overflow:hidden;">
<div class="row" style="top:1px;">
<svg class="ico" style="left:4px;top:1px" width="16" height="16" viewBox="0 0 16 16"><use href="#i-pm"/></svg>
<span class="t" style="left:25px;">打印管理</span></div>
<div class="row" style="top:19px;">
<svg class="ico" style="left:10px;top:7px" width="6" height="6" viewBox="0 0 6 6"><path d="M5.500 0.700V5.500H0.700Z" fill="#555" stroke="#222" stroke-width="1"/></svg>
<svg class="ico" style="left:24px;top:1px" width="16" height="16" viewBox="0 0 16 16"><use href="#i-ff"/></svg>
<span class="t" style="left:44px;">自定义筛选器</span></div>
<div class="row" style="top:37px;">
<svg class="ico" style="left:30px;top:5.500px" width="6" height="9" viewBox="0 0 6 9"><path d="M0.600 0.800L4.600 4.500L0.600 8.200Z" fill="#fff" stroke="#303030" stroke-width="1"/></svg>
<svg class="ico" style="left:43px;top:1px" width="16" height="16" viewBox="0 0 16 16"><use href="#i-ff"/></svg>
<span class="t" style="left:63px;">所有打印机 (2)</span></div>
<div class="row" style="top:55px;">
<svg class="ico" style="left:30px;top:5.500px" width="6" height="9" viewBox="0 0 6 9"><path d="M0.600 0.800L4.600 4.500L0.600 8.200Z" fill="#fff" stroke="#303030" stroke-width="1"/></svg>
<svg class="ico" style="left:43px;top:1px" width="16" height="16" viewBox="0 0 16 16"><use href="#i-ff"/></svg>
<span class="t" style="left:63px;">所有驱动程序 (6)</span></div>
<div class="row" style="top:73px;">
<svg class="ico" style="left:30px;top:5.500px" width="6" height="9" viewBox="0 0 6 9"><path d="M0.600 0.800L4.600 4.500L0.600 8.200Z" fill="#fff" stroke="#303030" stroke-width="1"/></svg>
<svg class="ico" style="left:43px;top:1px" width="16" height="16" viewBox="0 0 16 16"><use href="#i-ff"/></svg>
<span class="t" style="left:63px;">打印机包含作业</span></div>
<div class="row" style="top:91px;">
<svg class="ico" style="left:30px;top:5.500px" width="6" height="9" viewBox="0 0 6 9"><path d="M0.600 0.800L4.600 4.500L0.600 8.200Z" fill="#fff" stroke="#303030" stroke-width="1"/></svg>
<svg class="ico" style="left:43px;top:1px" width="16" height="16" viewBox="0 0 16 16"><use href="#i-ff"/></svg>
<span class="t" style="left:63px;">打印机未就绪</span></div>
<div class="row" style="top:109px;">
<svg class="ico" style="left:10px;top:7px" width="6" height="6" viewBox="0 0 6 6"><path d="M5.500 0.700V5.500H0.700Z" fill="#555" stroke="#222" stroke-width="1"/></svg>
<svg class="ico" style="left:24px;top:1px" width="16" height="16" viewBox="0 0 16 16"><use href="#i-srv"/></svg>
<span class="t" style="left:44px;">打印服务器</span></div>
<div class="row" style="top:127px;">
<svg class="ico" style="left:29px;top:7px" width="6" height="6" viewBox="0 0 6 6"><path d="M5.500 0.700V5.500H0.700Z" fill="#555" stroke="#222" stroke-width="1"/></svg>
<svg class="ico" style="left:43px;top:1px" width="16" height="16" viewBox="0 0 16 16"><use href="#i-srv"/></svg>
<span class="t" style="left:63px;letter-spacing:0px;">WIN-NFF7F0J5ELG (本地)</span></div>
<div class="row" style="top:145px;">
<svg class="ico" style="left:49px;top:5.500px" width="6" height="9" viewBox="0 0 6 9"><path d="M0.600 0.800L4.600 4.500L0.600 8.200Z" fill="#fff" stroke="#303030" stroke-width="1"/></svg>
<svg class="ico" style="left:62px;top:1px" width="16" height="16" viewBox="0 0 16 16"><use href="#i-drv"/></svg>
<span class="t" style="left:82px;">驱动程序</span></div>
<div class="row" style="top:163px;">
<svg class="ico" style="left:49px;top:5.500px" width="6" height="9" viewBox="0 0 6 9"><path d="M0.600 0.800L4.600 4.500L0.600 8.200Z" fill="#fff" stroke="#303030" stroke-width="1"/></svg>
<svg class="ico" style="left:62px;top:1px" width="16" height="16" viewBox="0 0 16 16"><use href="#i-form"/></svg>
<span class="t" style="left:82px;">纸张规格</span></div>
<div class="row" style="top:181px;">
<svg class="ico" style="left:49px;top:5.500px" width="6" height="9" viewBox="0 0 6 9"><path d="M0.600 0.800L4.600 4.500L0.600 8.200Z" fill="#fff" stroke="#303030" stroke-width="1"/></svg>
<svg class="ico" style="left:62px;top:1px" width="16" height="16" viewBox="0 0 16 16"><use href="#i-port"/></svg>
<span class="t" style="left:82px;">端口</span></div>
<div class="abs" style="left:59px;top:199px;width:62px;height:17px;background:#f1f1f1;box-sizing:border-box;border:1px solid #dcdcdc;"></div>
<div class="row" style="top:199px;">
<svg class="ico" style="left:61.19999999999999px;top:1px" width="16" height="16" viewBox="0 0 16 16"><use href="#i-prn"/></svg>
<span class="t" style="left:82px;">打印机</span></div>
<div class="row" style="top:217px;">
<svg class="ico" style="left:23.400000000000006px;top:1px" width="16" height="16" viewBox="0 0 16 16"><use href="#i-prn"/></svg>
<span class="t" style="left:44px;">已部署的打印机</span></div>
<div class="abs sb" style="left:1px;top:586px;width:188px;height:17px;"><div class="abs sbb" style="left:0;"><svg width="17" height="17" viewBox="0 0 17 17"><path d="M10 5L6.5 8.5L10 12" fill="none" stroke="#505050" stroke-width="1.4"/></svg></div><div class="abs sbt" style="left:16px;width:141px;"><i></i></div><div class="abs sbb" style="right:0;"><svg width="17" height="17" viewBox="0 0 17 17"><path d="M7 5L10.5 8.5L7 12" fill="none" stroke="#505050" stroke-width="1.4"/></svg></div></div>
</div>
<div class="abs" style="left:4px;top:56px;width:192px;height:1px;background:#8e969f;"></div>
<div class="abs" style="left:4px;top:56px;width:1px;height:605px;background:#a4a8ae;"></div>
<div class="abs" style="left:0px;top:53px;width:2px;height:608px;background:#b6c2d2;"></div>
<div class="abs" style="left:195px;top:56px;width:1px;height:605px;background:#9a9fa5;"></div>
<div class="abs" style="left:196px;top:53px;width:3px;height:608px;background:#eef0f2;"></div>
<div class="abs" style="left:199px;top:57px;width:2px;height:602px;background:#7a7d80;"></div>
<div id="list" class="abs pane" style="left:201px;top:58px;width:600px;height:599px;overflow:hidden;">
<div class="abs" style="left:0;top:0;width:700px;height:18px;background:#fff;border-bottom:1px solid #e2e4e6;"></div>
<div class="hdr" style="left:0px;width:200px;">打印机名称</div>
<div class="hdr" style="left:200px;width:100px;">队列状态</div>
<div class="hdr" style="left:300px;width:60px;">队列中...</div>
<div class="hdr" style="left:360px;width:100px;">服务器名</div>
<div class="hdr" style="left:460px;width:200px;">驱动程序名</div>
<svg class="ico" style="left:4px;top:21px" width="16" height="16" viewBox="0 0 16 16"><use href="#i-prn"/></svg>
<div class="cell" style="left:22px;top:19px;letter-spacing:0.43px;">Microsoft XPS Document Wr...</div>
<div class="cell" style="left:206px;top:19px;font-size:12px;letter-spacing:0;">就绪</div>
<div class="cell" style="left:306px;top:19px;">0</div>
<div class="cell" style="left:366px;top:19px;letter-spacing:0;">WIN-NFF7F0J...</div>
<div class="cell" style="left:466px;top:19px;letter-spacing:0.52px;">Microsoft XPS Document Writer</div>
<svg class="ico" style="left:4px;top:40px" width="16" height="16" viewBox="0 0 16 16"><use href="#i-prn"/></svg>
<div class="cell" style="left:22px;top:38px;letter-spacing:0.1px;">Canon</div>
<div class="cell" style="left:206px;top:38px;font-size:12px;letter-spacing:0;">就绪</div>
<div class="cell" style="left:306px;top:38px;">0</div>
<div class="cell" style="left:366px;top:38px;letter-spacing:0;">WIN-NFF7F0J...</div>
<div class="cell" style="left:466px;top:38px;letter-spacing:0.42px;">Canon Inkjet 0253 Class Driver</div>
<div class="abs sb" style="left:0;top:581px;width:599px;height:17px;"><div class="abs sbb" style="left:0;"><svg width="17" height="17" viewBox="0 0 17 17"><path d="M10 5L6.5 8.5L10 12" fill="none" stroke="#505050" stroke-width="1.4"/></svg></div><div class="abs sbt" style="left:17px;width:335px;"><i></i></div><div class="abs sbb" style="right:0;"><svg width="17" height="17" viewBox="0 0 17 17"><path d="M7 5L10.5 8.5L7 12" fill="none" stroke="#505050" stroke-width="1.4"/></svg></div></div>
</div>
<div class="abs" style="left:199px;top:57px;width:603px;height:1px;background:#7a7d80;"></div>
<div class="abs" style="left:801px;top:57px;width:2px;height:602px;background:#e4e6e8;"></div>
<div class="abs" style="left:199px;top:657px;width:606px;height:4px;background:linear-gradient(#e6e6e6,#f2f2f2);"></div>
<div class="abs" style="left:803px;top:53px;width:2px;height:608px;background:#f0f1f2;"></div>
<div class="abs" style="left:805px;top:57px;width:2px;height:604px;background:#6a6e72;"></div>
<div class="abs" style="left:805px;top:57px;width:251px;height:1px;background:#6a6e72;"></div>
<div id="act" class="abs pane" style="left:807px;top:58px;width:248px;height:603px;overflow:hidden;">
<div class="abs" style="left:0;top:0;width:250px;height:20px;background:#f1f0ec;border-bottom:1px solid #a0a0a0;"><div class="abs" style="left:5px;top:0;line-height:22px;font-weight:bold;font-size:12px;color:#111;">操作</div></div>
<div class="abs" style="left:0;top:21px;width:250px;height:26px;background:linear-gradient(#b9cbe3,#9db5d6);"><div class="abs" style="left:6.500px;top:0;line-height:25px;font-size:15px;color:#0c1a33;">打印机</div><svg class="abs" style="left:230px;top:10.500px" width="12" height="6.500" viewBox="0 0 13 7"><path d="M0.5 6.5L6.5 0.5L12.5 6.5Z" fill="#111"/></svg></div>
<div class="abs" style="left:30.500px;top:50px;line-height:19px;font-size:12px;">更多操作</div>
<svg class="abs" style="left:234.500px;top:53px" width="7" height="11" viewBox="0 0 7 11"><path d="M0.5 0.5L6.5 5.5L0.5 10.5Z" fill="#111"/></svg>
</div>
<div class="abs" style="left:1055px;top:57px;width:2px;height:604px;background:#c4c9cf;"></div>
<div class="abs" style="left:0;top:661px;width:1061px;height:1px;background:#c2c2c2;"></div><div class="abs" style="left:0;top:662px;width:1061px;height:1px;background:#b4b4b4;"></div>
<div class="abs" style="left:0;top:663px;width:1061px;height:8px;background:#fcfcfa;"></div>
<div class="abs" style="left:836px;top:664px;width:1px;height:6px;background:#d0d0d0;"></div>
<div class="abs" style="left:970px;top:664px;width:1px;height:6px;background:#d0d0d0;"></div>
<div class="abs" style="left:0;top:661px;width:5px;height:10px;background:linear-gradient(90deg,#b6c2d2 0,#b6c2d2 2px,#b0b3b8 2px);"></div>
</div>
</div>

<div id="taskbar" class="abs">
<div class="abs" style="left:0;top:0;width:1px;height:38px;background:#2a4a58;"></div><div class="abs" style="left:1365px;top:0;width:1px;height:38px;background:#2a4a58;"></div>
<!-- server manager -->
<svg class="abs" style="left:29px;top:2px" width="34" height="34" viewBox="0 0 34 34"><rect x="1.5" y="1.5" width="14" height="28" fill="#1e7fd6" stroke="#e8f6ff" stroke-width="1.2"/><path d="M1.5 9.5H15.5" stroke="#e8f6ff" stroke-width="1.2"/><rect x="6.500" y="19.500" width="26" height="13" rx="1.5" fill="#7f8894" stroke="#e8f6ff" stroke-width="1.2"/><path d="M15 19.500V17H24V19.500" fill="none" stroke="#e8f6ff" stroke-width="1.2"/><path d="M10 24.500H29M10 24.500l2.500 -2M10 24.500l2.500 2M29 24.500l-2.500 -2M29 24.500l-2.500 2" stroke="#f2f8fc" stroke-width="1.2" fill="none"/></svg>
<!-- powershell -->
<svg class="abs" style="left:94px;top:8px" width="28" height="24" viewBox="0 0 28 24"><defs><linearGradient id="gps" x1="0" y1="0" x2="0" y2="1"><stop offset="0" stop-color="#b4d0ea"/><stop offset="0.3" stop-color="#3f82d0"/><stop offset="0.75" stop-color="#2563b6"/><stop offset="1" stop-color="#3a86d6"/></linearGradient></defs><path d="M5 1H27L23 23H1Z" fill="url(#gps)" stroke="#7fb4e6" stroke-width="1.2" stroke-linejoin="round"/><path d="M8 5L17 11.500L7 18" fill="none" stroke="#fff" stroke-width="2.6" stroke-linecap="round"/><path d="M14 18.500H20" stroke="#fff" stroke-width="2"/></svg>
<!-- explorer -->
<svg class="abs" style="left:154px;top:6px" width="33" height="30" viewBox="0 0 33 30"><defs><linearGradient id="gex" x1="0" y1="0" x2="0" y2="1"><stop offset="0" stop-color="#fcefb4"/><stop offset="1" stop-color="#f3cd62"/></linearGradient><linearGradient id="gst" x1="0" y1="0" x2="0" y2="1"><stop offset="0" stop-color="#d4ecfa"/><stop offset="0.5" stop-color="#8cc8f0"/><stop offset="1" stop-color="#5aa8e4"/></linearGradient></defs>
<path d="M0.500 2.500Q0.500 0.500 2.500 0.500H15L17.500 2.500H29.500Q31.500 2.500 31.500 4.500V26.500H0.500Z" fill="url(#gex)" stroke="#dfbb55" stroke-width="0.800"/>
<rect x="1.500" y="2.800" width="16" height="2" fill="#fdf6d4"/><rect x="3" y="0.800" width="4" height="2.300" fill="#3faa3c"/>
<rect x="10" y="4.800" width="12" height="2" fill="#fdf6d4"/><rect x="12" y="3" width="3.500" height="2.300" fill="#d24a36"/>
<rect x="18" y="6.800" width="12.500" height="2" fill="#fdf6d4"/><rect x="20" y="5" width="3.500" height="2.300" fill="#3a68c8"/>
<path d="M1 9.500H31" stroke="#efd27a" stroke-width="0.800"/>
<path d="M4.500 28.500V18Q4.500 16 6.500 16H25.500Q27.500 16 27.500 18V28.500H21.500V22H10.500V28.500Z" fill="url(#gst)" stroke="#cfe8f8" stroke-width="0.900"/>
</svg>
<!-- active print management -->
<svg class="abs" style="left:202px;top:-1px" width="60" height="39" viewBox="0 0 60 39"><defs><pattern id="dots" width="2" height="2" patternUnits="userSpaceOnUse"><rect width="2" height="2" fill="#9fe1dc"/><rect width="1" height="1" fill="#e6f9f7"/></pattern></defs><rect x="0.500" y="0.500" width="59" height="39" fill="url(#dots)" stroke="#145a6a"/></svg>
<svg class="abs" style="left:215px;top:4px" width="34" height="32" viewBox="0 0 34 32"><defs><linearGradient id="gwh" x1="0" y1="0" x2="1" y2="0"><stop offset="0" stop-color="#d89c10"/><stop offset="0.45" stop-color="#ffe24a"/><stop offset="1" stop-color="#c88a0c"/></linearGradient></defs>
<path d="M2.500 6.500Q2 3 5 1.500L6 4.500L8.500 4L9 1Q12 3 11 6.500Q9.500 9 8.500 10H4.500Q3 8.500 2.500 6.500Z" fill="#e9ecef" stroke="#9aa2aa" stroke-width="0.700"/>
<rect x="4" y="10" width="4.600" height="19.500" rx="1.800" fill="url(#gwh)" stroke="#a87608" stroke-width="0.700"/>
<path d="M21.500 15L23 7.500L32 8.500L29 16.500Z" fill="#fff" stroke="#c6cad0" stroke-width="0.600"/>
<path d="M9.500 20.500L20 14.500H29L31 17L20.500 24Z" fill="#3c4046"/>
<path d="M20.500 24L31 17L32.500 19V21L22 28.500L19.500 26Z" fill="#e4e6ea" stroke="#a8acb2" stroke-width="0.500"/>
<path d="M9.500 20.500L20.500 24L19.500 26.500L22 28.500L15 28L8.500 24.500Z" fill="#c9ccd2" stroke="#8a9098" stroke-width="0.500"/>
<ellipse cx="14.500" cy="25" rx="2.600" ry="1.600" fill="#5a6068"/>
</svg>
<!-- tray -->
<svg class="abs" style="left:1162px;top:17px" width="8" height="4" viewBox="0 0 8 4"><path d="M0 4L3.800 0L7.600 4Z" fill="#0c1a2a"/></svg>
<svg class="abs" style="left:1181px;top:11px" width="18" height="17" viewBox="0 0 18 17"><rect x="1.300" y="0.500" width="2" height="15" fill="#fff" stroke="#16324a" stroke-width="0.800"/><path d="M3.300 1.200H9.500Q11.500 2.600 15.600 2.200V8.400Q12 9.400 9.500 8.200H3.300Z" fill="#fff" stroke="#16324a" stroke-width="0.800"/><circle cx="12.300" cy="11.200" r="4.400" fill="#d8232a" stroke="#f6d6d6" stroke-width="0.600"/><path d="M10.300 9.200L14.300 13.200M14.300 9.200L10.300 13.200" stroke="#fff" stroke-width="1.500"/></svg>
<svg class="abs" style="left:1205px;top:11px" width="18" height="17" viewBox="0 0 18 17"><rect x="7.500" y="1.500" width="8.800" height="11" fill="#7cc4e2" stroke="#16324a" stroke-width="1.100"/><rect x="8.600" y="2.600" width="6.600" height="8.800" fill="none" stroke="#fff" stroke-width="0.900"/><path d="M4 6V13.500H8.500" fill="none" stroke="#16324a" stroke-width="2.400"/><path d="M4 6V13.500H8.500" fill="none" stroke="#fff" stroke-width="1"/><rect x="1.600" y="0.600" width="4.800" height="5.800" rx="2" fill="#fff" stroke="#16324a" stroke-width="1"/><rect x="3.300" y="1.900" width="1.400" height="2.600" fill="#16324a"/><path d="M12.700 7.300L17 15.700H8.400Z" fill="#f6c416" stroke="#b88c08" stroke-width="0.600"/><path d="M12.700 10V13M12.700 13.800V14.900" stroke="#1a1a1a" stroke-width="1.200"/></svg>
<div class="abs" style="left:1300px;top:4px;width:40px;height:16px;line-height:16px;font-size:12.500px;color:#0c1a2a;white-space:nowrap;">2:20</div>
<div class="abs" style="left:1278px;top:19px;width:70px;height:16px;line-height:16px;font-size:12.500px;color:#0c1a2a;white-space:nowrap;text-align:center;">2015/11/21</div>
</div>
<!-- watermark -->
<div class="abs" id="wm1" style="left:1227px;top:695px;width:180px;height:36px;line-height:36px;font-size:32px;font-weight:bold;font-family:'Liberation Sans',sans-serif;color:#c6c6c6;white-space:nowrap;text-shadow:1px 1px 0 #8a8a8a,2px 2px 0 #5e5e5e,3px 2px 1px #4a4a4a,-1px -1px 0 #ededed;transform-origin:0 50%;transform:scaleX(0.69);-webkit-text-stroke:1.3px #c6c6c6;">51CTO.com</div>
<div class="abs" style="left:1232px;top:728px;width:118px;height:2px;background:#bdbdbd;"></div>
<div class="abs" style="left:1228px;top:732px;width:80px;height:24px;line-height:24px;font-size:19.4px;font-weight:bold;color:#d4d4d4;white-space:nowrap;text-shadow:1px 1px 0 #7a7a7a,2px 2px 1px #666;">技术博客</div>
<div class="abs" style="left:1321px;top:733px;width:34px;height:18px;line-height:18px;font-size:13.5px;font-weight:bold;color:#d8d8d8;white-space:nowrap;text-shadow:1px 1px 0 #777,2px 2px 1px #666;">Blog</div>

</body>
</html>
